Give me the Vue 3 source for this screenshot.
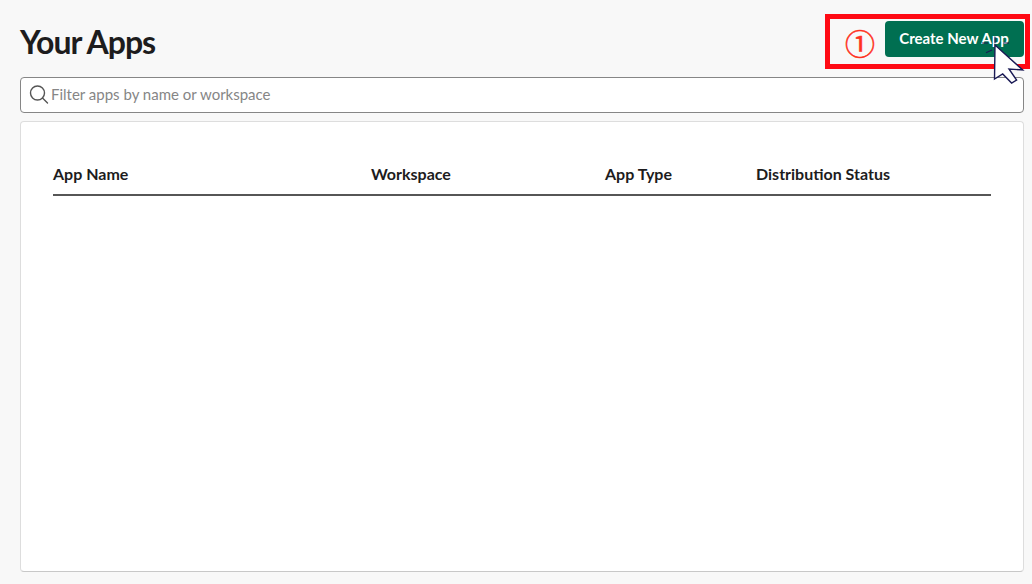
<template>
  <div class="page">
    <header class="top">
      <h1 class="title">Your Apps</h1>
      <button class="create" type="button">Create New App</button>
    </header>
    <div class="search">
      <svg class="glass" width="20" height="20" viewBox="0 0 20 20" fill="none" stroke="#555" stroke-width="1.4">
        <circle cx="8.5" cy="9" r="7" />
        <path d="M13.5 14l5 5" stroke-linecap="round" />
      </svg>
      <span class="placeholder">Filter apps by name or workspace</span>
    </div>
    <section class="panel">
      <div class="cols">
        <span class="c1">App Name</span>
        <span class="c2">Workspace</span>
        <span class="c3">App Type</span>
        <span class="c4">Distribution Status</span>
      </div>
    </section>
    <div class="callout">
      <span class="num">①</span>
    </div>
    <svg class="cursor" width="52" height="56" viewBox="0 0 52 56">
      <path d="M17 3V9M4 9H10M25 9H31M8 18.7L14 16" stroke="#1a1a55" stroke-width="1.2" fill="none" />
      <path d="M17 11L16.5 45L24.7 40L33.6 49L38.6 46L31 35L44.7 36Z" fill="#fff" stroke="#1a1a55" stroke-width="1.4" stroke-linejoin="miter" />
    </svg>
  </div>
</template>

<script setup>
</script>

<style>
html, body { margin: 0; background: #f8f8f8; }
</style>

<style scoped>
.page {
  position: relative;
  box-sizing: border-box;
  width: 1032px;
  height: 584px;
  overflow: hidden;
  padding: 21px 8px 12px 20px;
  background: #f8f8f8;
  font-family: Lato, "Liberation Sans", sans-serif;
  color: #1d1c1d;
}
.top {
  display: flex;
  justify-content: space-between;
  align-items: flex-start;
  height: 56px;
}
.title {
  margin: 0;
  font-size: 32px;
  line-height: 41px;
  font-weight: 700;
  letter-spacing: -1px;
}
.create {
  box-sizing: border-box;
  width: 139px;
  height: 36px;
  padding: 0 1px 2px 0;
  border: 0;
  border-radius: 4px;
  background: #006f51;
  color: #fff;
  font-family: inherit;
  font-size: 15px;
  font-weight: 700;
}
.search {
  box-sizing: border-box;
  display: flex;
  align-items: center;
  gap: 2px;
  height: 36px;
  padding: 0 8px 2px;
  background: #fff;
  border: 1px solid #868686;
  border-radius: 4px;
}
.placeholder {
  font-size: 15px;
  color: #868686;
}
.panel {
  box-sizing: border-box;
  height: 451px;
  margin-top: 8px;
  padding: 40px 32px 0;
  background: #fff;
  border: 1px solid #ddd;
  border-bottom-color: #c8c8c8;
  border-radius: 4px;
}
.cols {
  display: grid;
  grid-template-columns: 318px 234px 151px 1fr;
  height: 32px;
  border-bottom: 2px solid #565656;
  font-size: 16px;
  font-weight: 700;
  line-height: 24px;
}
.callout {
  box-sizing: border-box;
  position: absolute;
  left: 825px;
  top: 14px;
  width: 205px;
  height: 55px;
  border: 5px solid #ff0a14;
  pointer-events: none;
}
.num {
  position: absolute;
  left: 15px;
  top: 2px;
  font-family: "Noto Sans CJK JP", sans-serif;
  font-size: 30px;
  font-weight: 400;
  line-height: 42px;
  color: #ff3020;
  -webkit-text-stroke: 0.5px #ff3020;
}
.cursor {
  position: absolute;
  left: 978px;
  top: 34px;
}
</style>
